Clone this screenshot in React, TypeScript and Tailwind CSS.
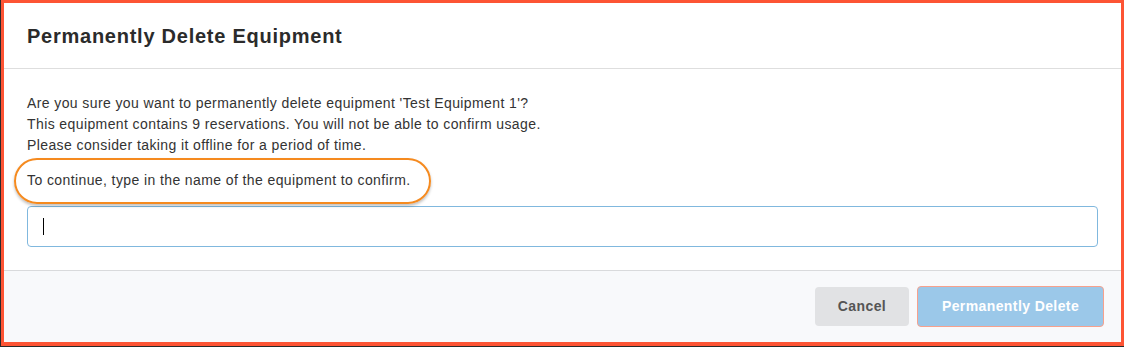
import React from "react";

export default function App() {
  return (
    <div className="w-[1124px] h-[347px] bg-[#2a2a2a] pl-px pb-px overflow-hidden" style={{ fontFamily: '"Liberation Sans", Arial, sans-serif' }}>
      <div className="w-full h-full bg-[#fd5434] pt-[3px] pl-[3px] pr-[3px] pb-[4px]">
        <div className="relative w-full h-full bg-white flex flex-col">
          <div className="h-[66px] border-b border-[#dedede] flex items-center px-[23px]">
            <h1 className="text-[20px] font-bold text-[#2b2b2b] tracking-[0.75px]">Permanently Delete Equipment</h1>
          </div>
          <div className="px-[23px] pt-[24px] pb-[23px] border-b border-[#d9dadc] text-[14px] text-[#333] leading-[21px] tracking-[0.4px]">
            <p>Are you sure you want to permanently delete equipment 'Test Equipment 1'?</p>
            <p>This equipment contains 9 reservations. You will not be able to confirm usage.</p>
            <p>Please consider taking it offline for a period of time.</p>
            <p className="mt-[14px]">To continue, type in the name of the equipment to confirm.</p>
            <div className="mt-[15px] h-[41px] border border-[#80b8de] rounded-[4px] flex items-center pl-[15px]">
              <span className="block w-px h-[17px] bg-black" />
            </div>
          </div>
          <div className="flex-1 bg-[#f8f9fb] flex items-center justify-end gap-[8px] pr-[17px]">
            <button className="h-[39px] w-[94px] rounded-[4px] bg-[#e1e2e4] text-[14px] font-bold text-[#555] tracking-[0.4px]">Cancel</button>
            <button className="h-[41px] w-[187px] rounded-[4px] bg-[#9bc8e9] border border-[#f7a18d] text-[14px] font-bold text-white tracking-[0.4px]">Permanently Delete</button>
          </div>
          <div className="absolute left-[10px] top-[155px] w-[417px] h-[46px] rounded-[23px] border-2 border-[#f58a1f] shadow-[0_2px_3px_rgba(0,0,0,0.25)] pointer-events-none" />
        </div>
      </div>
    </div>
  );
}
